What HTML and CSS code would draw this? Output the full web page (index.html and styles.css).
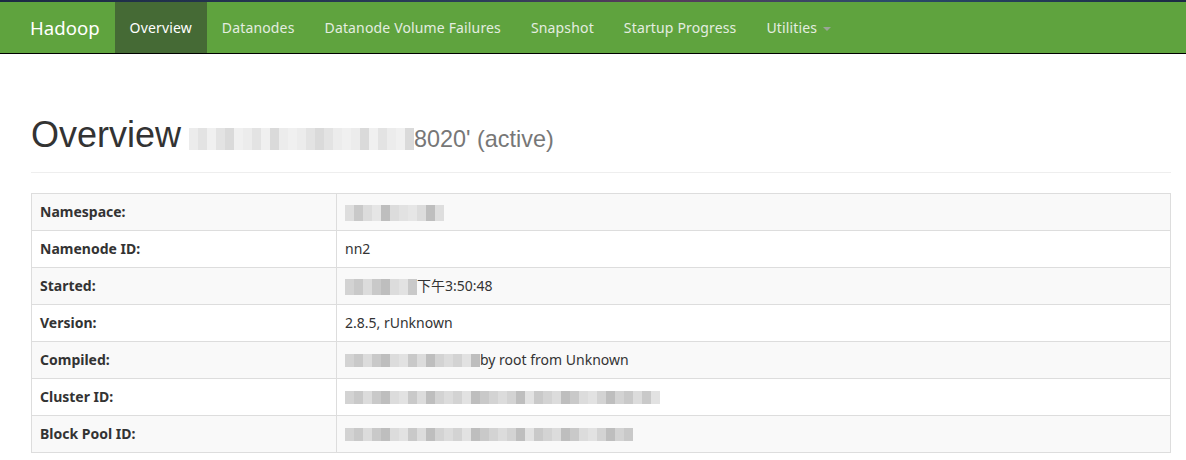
FILE: index.html
```html
<!DOCTYPE html>
<html>
<head>
<meta charset="utf-8">
<title>Namenode information</title>
<link rel="stylesheet" href="styles.css">
</head>
<body>
<div class="topstrip"></div>
<header class="navbar">
  <a class="brand">Hadoop</a>
  <ul class="nav">
    <li class="active"><a>Overview</a></li>
    <li><a>Datanodes</a></li>
    <li><a>Datanode Volume Failures</a></li>
    <li><a>Snapshot</a></li>
    <li><a>Startup Progress</a></li>
    <li><a>Utilities <span class="caret"></span></a></li>
  </ul>
</header>
<main class="container">
  <div class="page-header">
    <h1>Overview <small><span class="mosaic soft head"><i></i><i></i><i></i><i></i><i></i><i></i><i></i><i></i><i></i><i></i><i></i><i></i><i></i><i></i><i></i><i></i><i></i><i></i><i></i><i></i><i></i><i></i><i></i><i></i><i></i></span>8020' (active)</small></h1>
  </div>
  <table class="table">
    <tr><th>Namespace:</th><td><span class="mosaic two ns"><i></i><i></i><i></i><i></i><i></i><i></i><i></i><i></i><i></i><i></i><i></i></span></td></tr>
    <tr><th>Namenode ID:</th><td>nn2</td></tr>
    <tr><th>Started:</th><td><span class="mosaic two st"><i></i><i></i><i></i><i></i><i></i><i></i><i></i><i></i></span>下午3:50:48</td></tr>
    <tr><th>Version:</th><td>2.8.5, rUnknown</td></tr>
    <tr><th>Compiled:</th><td><span class="mosaic cp"><i></i><i></i><i></i><i></i><i></i><i></i><i></i><i></i><i></i><i></i><i></i><i></i><i></i><i></i><i></i></span>by root from Unknown</td></tr>
    <tr><th>Cluster ID:</th><td><span class="mosaic cl"><i></i><i></i><i></i><i></i><i></i><i></i><i></i><i></i><i></i><i></i><i></i><i></i><i></i><i></i><i></i><i></i><i></i><i></i><i></i><i></i><i></i><i></i><i></i><i></i><i></i><i></i><i></i><i></i><i></i><i></i><i></i><i></i><i></i><i></i><i></i></span></td></tr>
    <tr><th>Block Pool ID:</th><td><span class="mosaic bp"><i></i><i></i><i></i><i></i><i></i><i></i><i></i><i></i><i></i><i></i><i></i><i></i><i></i><i></i><i></i><i></i><i></i><i></i><i></i><i></i><i></i><i></i><i></i><i></i><i></i><i></i><i></i><i></i><i></i><i></i><i></i><i></i></span></td></tr>
  </table>
</main>
</body>
</html>
```
FILE: styles.css
```css
* { box-sizing: border-box; }
html, body { margin: 0; padding: 0; background: #fff; }
body {
  font-family: "Noto Sans", "Noto Sans CJK SC", sans-serif;
  font-size: 14px;
  line-height: 20px;
  color: #333;
}
.topstrip {
  height: 2px;
  background: linear-gradient(90deg, #1c2a44 0%, #2a3d5a 40%, #5a3a5a 55%, #2a4a6a 75%, #1c2a44 100%);
}
.navbar {
  display: flex;
  align-items: stretch;
  height: 52px;
  padding-left: 15px;
  background: #5fa33e;
  border-bottom: 1px solid #000;
}
.brand {
  display: flex;
  align-items: center;
  padding: 0 15px;
  font-size: 18.6px;
  color: #fff;
}
.nav {
  display: flex;
  list-style: none;
  margin: 0;
  padding: 0;
}
.nav li { display: flex; }
.nav a {
  display: flex;
  align-items: center;
  padding: 0 15px;
  color: #e4ede0;
  font-size: 14px;
  letter-spacing: 0.15px;
}
.nav li.active a {
  background: #456a35;
  color: #fff;
}
.caret {
  display: inline-block;
  width: 0;
  height: 0;
  margin-left: 6px;
  margin-top: 2px;
  border-top: 4px solid #9aa596;
  border-left: 4px solid transparent;
  border-right: 4px solid transparent;
}
.container {
  padding: 0 15px 0 31px;
}
.page-header {
  margin: 61px 0 20px;
  padding-bottom: 17px;
  border-bottom: 1px solid #eee;
}
h1 {
  margin: 0;
  font-family: "Liberation Sans", Arial, sans-serif;
  font-weight: 400;
  font-size: 36px;
  line-height: 1.1;
  color: #333;
}
h1 small {
  font-size: 65%;
  color: #777;
}
.table {
  width: 100%;
  border-collapse: collapse;
  border: 1px solid #ddd;
}
.table th, .table td {
  border: 1px solid #ddd;
  padding: 8px;
  height: 37px;
  text-align: left;
  vertical-align: middle;
}
.table th { width: 305px; font-weight: 700; }
.table tr:nth-child(odd) { background: #f9f9f9; }

.mosaic {
  display: inline-flex;
  vertical-align: middle;
  filter: blur(0.6px);
}
.mosaic i {
  display: block;
  width: 9px;
  height: 13px;
  background: #d3d3d3;
}
.mosaic i:nth-child(2n) { background: #c9c9c9; }
.mosaic i:nth-child(3n) { background: #dcdcdc; }
.mosaic i:nth-child(5n) { background: #bebebe; }
.mosaic i:nth-child(7n) { background: #e2e2e2; }
.mosaic.soft i { background: #ececec; height: 22px; }
.mosaic.soft i:nth-child(2n) { background: #e3e3e3; }
.mosaic.soft i:nth-child(3n) { background: #f0f0f0; }
.mosaic.soft i:nth-child(5n) { background: #dadada; }
.mosaic.head { margin: 0 0 0 -2px; position: relative; top: -2px; }
.mosaic.two i { height: 16px; }
.ns i { background: #dedede; }
.ns i:nth-child(4n) { background: #e6e6e6; }
.cp { margin-right: 0; }
```
